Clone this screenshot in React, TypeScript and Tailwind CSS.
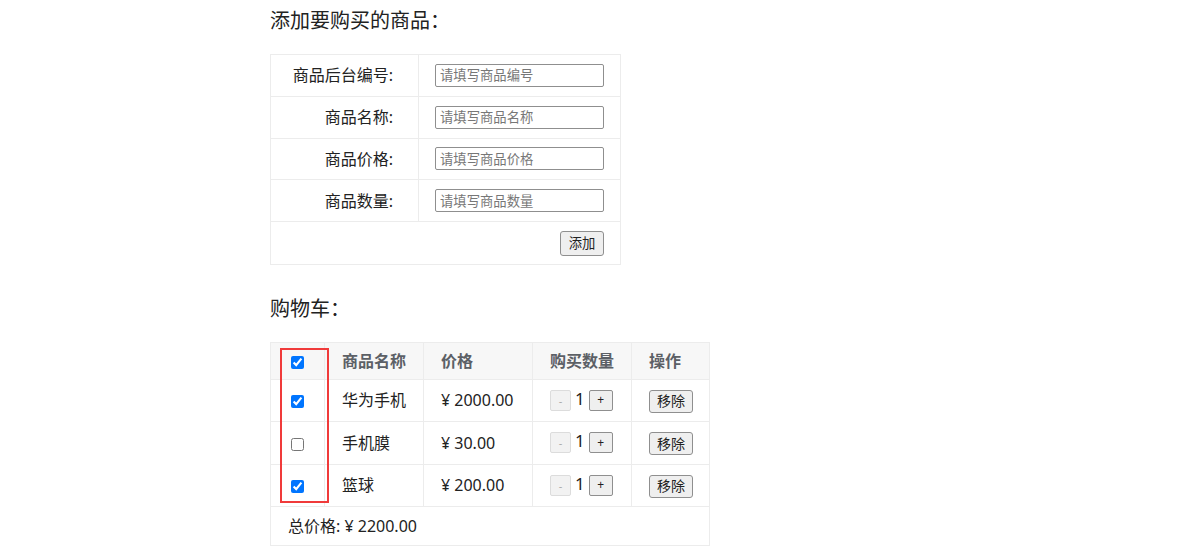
import { useState } from 'react';

const FIELDS = [
  { label: '商品后台编号:', ph: '请填写商品编号' },
  { label: '商品名称:', ph: '请填写商品名称' },
  { label: '商品价格:', ph: '请填写商品价格' },
  { label: '商品数量:', ph: '请填写商品数量' },
];

const INITIAL = [
  { id: 1, name: '华为手机', price: 2000, qty: 1, checked: true },
  { id: 2, name: '手机膜', price: 30, qty: 1, checked: false },
  { id: 3, name: '篮球', price: 200, qty: 1, checked: true },
];

const font = { fontFamily: '"Noto Sans", "Noto Sans CJK SC", sans-serif' };

export default function App() {
  const [items, setItems] = useState(INITIAL);
  const [all, setAll] = useState(true);
  const total = items.filter(i => i.checked).reduce((s, i) => s + i.price * i.qty, 0);

  const update = (id: number, patch: Partial<(typeof INITIAL)[number]>) =>
    setItems(items.map(i => (i.id === id ? { ...i, ...patch } : i)));

  return (
    <div className="min-h-[560px] bg-white pl-[270px] pt-[7px] text-[16px] text-[#222]" style={font}>
      <h3 className="h-[28px] text-[20px] leading-[28px] font-normal">添加要购买的商品：</h3>

      <table className="mt-[19px] w-[351px] border-collapse border border-[#ececec]">
        <tbody>
          {FIELDS.map(f => (
            <tr key={f.label} className="h-[41.75px]">
              <td className="w-[148px] border border-[#ececec] pr-[25px] text-right">{f.label}</td>
              <td className="border border-[#ececec] px-[16px]">
                <input
                  placeholder={f.ph}
                  className="block h-[23px] w-[169px] rounded-[2px] border border-[#8f8f8f] px-[4px] text-[13.33px] placeholder:text-[#777] outline-none"
                />
              </td>
            </tr>
          ))}
          <tr className="h-[42.5px]">
            <td colSpan={2} className="border border-[#ececec] px-[16px] text-right">
              <button className="-mt-[3px] h-[25px] w-[44px] rounded-[3px] border border-[#8f8f8f] bg-[#efefef] text-[13.33px] leading-none">
                添加
              </button>
            </td>
          </tr>
        </tbody>
      </table>

      <h3 className="mt-[30px] h-[28px] text-[20px] leading-[28px] font-normal">购物车：</h3>

      <div className="relative mt-[19px] w-[440px]">
        <table className="w-[440px] border-collapse border border-[#ececec]">
          <thead>
            <tr className="h-[37px] bg-[#f7f7f7] text-left font-bold text-[#5c6066]">
              <th className="w-[54px] border border-[#ececec] text-center">
                <input
                  type="checkbox"
                  checked={all}
                  onChange={e => {
                    setAll(e.target.checked);
                    setItems(items.map(i => ({ ...i, checked: e.target.checked })));
                  }}
                  className="align-middle"
                />
              </th>
              <th className="w-[99px] border border-[#ececec] pl-[17px]">商品名称</th>
              <th className="w-[109px] border border-[#ececec] pl-[17px]">价格</th>
              <th className="w-[99px] border border-[#ececec] pl-[17px]">购买数量</th>
              <th className="border border-[#ececec] pl-[17px]">操作</th>
            </tr>
          </thead>
          <tbody>
            {items.map(item => (
              <tr key={item.id} className="h-[42.5px]">
                <td className="border border-[#ececec] text-center">
                  <input
                    type="checkbox"
                    checked={item.checked}
                    onChange={e => update(item.id, { checked: e.target.checked })}
                    className="align-middle"
                  />
                </td>
                <td className="border border-[#ececec] pl-[17px]">{item.name}</td>
                <td className="border border-[#ececec] pl-[17px]">¥ {item.price.toFixed(2)}</td>
                <td className="border border-[#ececec] pl-[17px]">
                  <div className="flex items-center">
                    <button
                      disabled={item.qty <= 1}
                      onClick={() => update(item.id, { qty: item.qty - 1 })}
                      className="h-[21px] w-[21px] rounded-[2px] border border-[#dcdcdc] bg-[#f2f2f2] text-[11px] leading-none text-[#aaa]"
                    >
                      -
                    </button>
                    <span className="mx-[4px] -mt-[4px] text-[17px]">{item.qty}</span>
                    <button
                      onClick={() => update(item.id, { qty: item.qty + 1 })}
                      className="h-[21px] w-[24px] rounded-[2px] border border-[#8f8f8f] bg-[#efefef] text-[12px] leading-none"
                    >
                      +
                    </button>
                  </div>
                </td>
                <td className="border border-[#ececec] pl-[17px]">
                  <button
                    onClick={() => setItems(items.filter(i => i.id !== item.id))}
                    className="h-[23px] w-[44px] rounded-[3px] border border-[#8f8f8f] bg-[#efefef] text-[14px] leading-none"
                  >
                    移除
                  </button>
                </td>
              </tr>
            ))}
            <tr className="h-[39px]">
              <td colSpan={5} className="border border-[#ececec] pl-[17px]">
                总价格: ¥ {total.toFixed(2)}
              </td>
            </tr>
          </tbody>
        </table>
        {/* annotation box around the checkbox column */}
        <div className="pointer-events-none absolute left-[10px] top-[6px] h-[155px] w-[49px] border-2 border-[#f03a3a]" />
      </div>
    </div>
  );
}
